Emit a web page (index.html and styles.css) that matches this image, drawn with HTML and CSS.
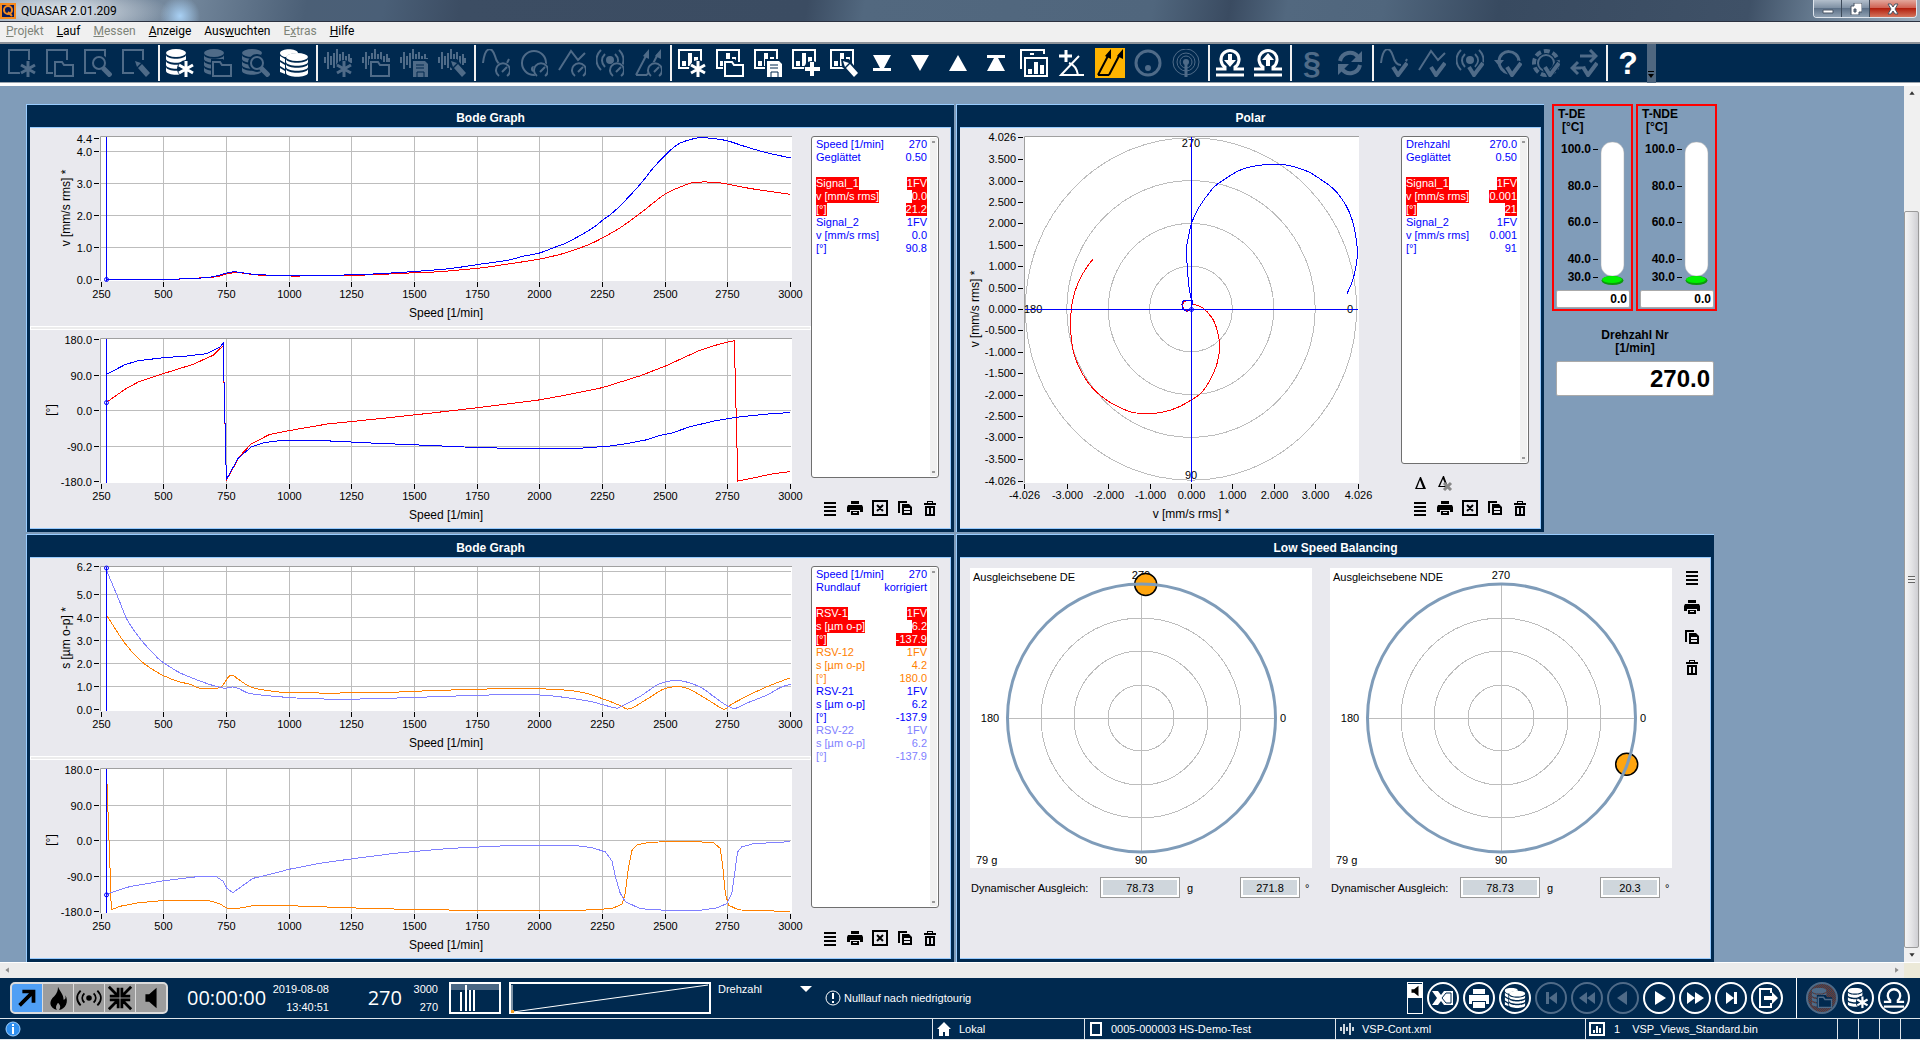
FILE: index.html
```html
<!DOCTYPE html>
<html lang="de">
<head>
    <meta charset="UTF-8">
    <meta name="viewport" content="width=device-width, initial-scale=1.0">
    <title>QUASAR 2.01.209</title>
    <link rel="stylesheet" href="styles.css">
</head>
<body>
    <!-- icon sheet -->
    <svg class="sheet" aria-hidden="true">
        <!-- base shapes -->
        <symbol id="b-page" viewBox="0 0 28 28"><path class="ln" d="M21 11V1H1v23h11"/></symbol>
        <symbol id="b-db" viewBox="0 0 28 28"><ellipse cx="10" cy="4" rx="10" ry="4"/><path d="M0 6c1 5 19 5 20 0v4c-1 5-19 5-20 0zM0 12c1 5 19 5 20 0v4c-1 5-19 5-20 0zM0 18c1 5 19 5 20 0v4c-1 5-19 5-20 0z"/></symbol>
        <symbol id="b-wave" viewBox="0 0 28 28"><path class="ln" d="M1 8v6M4 3v17M7 7v9M10 4v15M13 0v21M16 5v13M19 3v16M22 7v9M25 5v11M27 9v5"/></symbol>
        <symbol id="b-bars" viewBox="0 0 28 28"><path class="ln" d="M1 1h22v18H1z"/><path d="M4 12h4v5H4zM10 4h4v13h-4zM16 8h4v9h-4z"/></symbol>
        <symbol id="b-sine" viewBox="0 0 28 28"><path class="ln" d="M1 14C3-3 10-3 13 7c2 8 5 9 8 9M25 14l2-4"/></symbol>
        <symbol id="b-zig" viewBox="0 0 28 28"><path class="ln" d="M1 21L13 2l7 9 7-7"/></symbol>
        <symbol id="b-radio" viewBox="0 0 28 28"><circle cx="14" cy="11" r="4"/><path class="ln" d="M9 5c-4 4-4 9 0 13M19 5c4 4 4 9 0 13M5 1c-6 6-6 14 0 20M23 1c6 6 6 14 0 20"/></symbol>
        <!-- overlays, lower right corner -->
        <symbol id="o-star" viewBox="0 0 28 28"><circle class="ko" cx="20" cy="20" r="9"/><path class="ln" stroke-width="3" d="M20 12v16M13 16l14 8M27 16l-14 8"/></symbol>
        <symbol id="o-folder" viewBox="0 0 28 28"><path class="ko" d="M7 10h12l2 3h7v15H7z"/><path class="lk" d="M9 13h7l2 3h9v11H9z"/></symbol>
        <symbol id="o-mag" viewBox="0 0 28 28"><circle class="ko" cx="15" cy="14" r="9"/><circle class="lk" cx="15" cy="14" r="6"/><path class="ln" stroke-width="5" d="M19 19l8 8"/></symbol>
        <symbol id="o-pen" viewBox="0 0 28 28"><path class="ko" d="M11 10l8 0 9 12v6h-5L12 18z"/><path d="M13 12l6 2-4 4zM16 19l4-4 8 9-4 4z"/></symbol>
        <symbol id="o-save" viewBox="0 0 28 28"><path class="ko" d="M11 10h17v18H11z"/><path d="M13 12h12l3 3v13H13z"/><path class="kl" d="M16 16h8M16 19h8M17 28v-5h7v5"/></symbol>
        <symbol id="o-plus" viewBox="0 0 28 28"><circle class="ko" cx="20" cy="20" r="8"/><path class="ln" stroke-width="4" d="M20 13v14M13 20h15"/></symbol>
        <symbol id="o-gauge" viewBox="0 0 28 28"><circle class="ko" cx="21" cy="21" r="8"/><path class="ln" d="M17 27a7 7 0 1 1 8 0M20 23l5-5"/></symbol>
        <symbol id="o-check" viewBox="0 0 28 28"><path class="kl" stroke-width="6" d="M13 19l5 7 9-13"/><path class="ln" stroke-width="4" d="M13 18l5 8 9-12"/></symbol>
        <!-- whole glyphs -->
        <symbol id="i-dbs" viewBox="0 0 28 28"><path d="M0 4c1-5 17-5 18 0-5 0-10 1-12 4C3 8 0 6 0 4zM0 7l5 3v4l-5-3zM0 13l5 3v4l-5-3zM0 19l5 3v3l-5-2z"/><ellipse cx="17" cy="8" rx="11" ry="4"/><path d="M6 10c1 5 21 5 22 0v3c-1 5-21 5-22 0zM6 15c1 5 21 5 22 0v3c-1 5-21 5-22 0zM6 20c1 5 21 5 22 0v4c-1 5-21 5-22 0z"/></symbol>
        <symbol id="i-ring" viewBox="0 0 28 28"><circle class="ln" cx="14" cy="14" r="12"/><circle cx="14" cy="20" r="3"/></symbol>
        <symbol id="i-vec" viewBox="0 0 28 28"><path class="ln" d="M2 26L13 5M13 26L24 5M2 26h11"/><path d="M15 0v10l-6-3zM27 0v10l-6-3z"/></symbol>
        <symbol id="i-bottom" viewBox="0 0 28 28"><path d="M5 6h18l-7 13H12zM5 19h18v3H5z"/></symbol>
        <symbol id="i-down" viewBox="0 0 28 28"><path d="M5 6h18l-9 16z"/></symbol>
        <symbol id="i-up" viewBox="0 0 28 28"><path d="M5 22h18L14 6z"/></symbol>
        <symbol id="i-top" viewBox="0 0 28 28"><path d="M5 22h18l-7-13H12zM5 6h18v3H5z"/></symbol>
        <symbol id="i-charts" viewBox="0 0 28 28"><path class="ln" d="M1 20V1h23v4M10 5h4"/><path class="lk" d="M5 9h22v18H5z"/><path d="M8 20h4v5H8zM14 13h4v12h-4zM20 16h4v9h-4z"/></symbol>
        <symbol id="i-angle" viewBox="0 0 28 28"><path class="ln" stroke-width="3" d="M8 1v12M1 7h13"/><path class="ln" d="M26 26H3L21 7M11 14c6 2 8 6 9 12"/></symbol>
        <symbol id="i-dotring" viewBox="0 0 28 28"><circle class="ln" stroke-width="3" cx="14" cy="14" r="12"/><circle cx="14" cy="19" r="3"/></symbol>
        <symbol id="i-mast" viewBox="0 0 28 28"><circle class="ln" cx="14" cy="13" r="13" stroke-width="1"/><circle class="ln" cx="14" cy="13" r="9" stroke-width="1"/><circle class="ln" cx="14" cy="13" r="6" stroke-width="1"/><circle cx="14" cy="13" r="3"/><path class="ln" stroke-width="3" d="M14 14v14"/></symbol>
        <symbol id="i-omdown" viewBox="0 0 28 28"><path class="ln" stroke-width="3" d="M0 20h9v-2a9 9 0 1 1 10 0v2h9M0 26h28"/><path d="M12 5h4v6h4l-6 7-6-7h4z"/></symbol>
        <symbol id="i-omup" viewBox="0 0 28 28"><path class="ln" stroke-width="3" d="M0 20h9v-2a9 9 0 1 1 10 0v2h9M0 26h28"/><path d="M12 17h4v-6h4l-6-7-6 7h4z"/></symbol>
        <symbol id="i-omega" viewBox="0 0 28 28"><path class="ln" stroke-width="3" d="M1 19h8v-2a8 8 0 1 1 10 0v2h8M1 25h26"/></symbol>
        <symbol id="i-sync" viewBox="0 0 28 28"><path class="ln" stroke-width="4" d="M4 12C6 3 17 1 22 8M24 16c-2 9-13 11-18 4"/><path d="M26 2v11H15zM2 26V15h11z"/></symbol>
        <symbol id="i-loop" viewBox="0 0 28 28"><path class="ln" stroke-width="3" d="M5 12C6-1 24 0 25 12M5 13c0 5 4 10 9 11"/><path d="M0 11h10l-5 6z"/></symbol>
        <symbol id="i-bear" viewBox="0 0 28 28"><circle class="ln" cx="14" cy="14" r="12" stroke-width="4" stroke-dasharray="6 3"/><circle class="ln" cx="14" cy="14" r="8" stroke-width="2"/></symbol>
        <symbol id="i-swap" viewBox="0 0 28 28"><path class="ln" stroke-width="3" d="M10 7h16M20 1l6 6-6 6M16 19H2M8 13l-6 6 6 6"/></symbol>
        <!-- small panel glyphs -->
        <symbol id="s-menu" viewBox="0 0 16 16"><path d="M2 2h12v2H2zM2 6h12v2H2zM2 10h12v2H2zM2 14h12v2H2z"/></symbol>
        <symbol id="s-print" viewBox="0 0 16 16"><path d="M4 1h8v3H4zM1 5h14l1 2v5h-3v-2H3v2H0V7zM4 11h8v4H4z"/><path class="pale" d="M6 12h4v1H6z"/></symbol>
        <symbol id="s-x" viewBox="0 0 16 16"><path fill="none" stroke="currentColor" stroke-width="2" d="M1 1h14v14H1zM5 5l6 6M11 5l-6 6"/></symbol>
        <symbol id="s-copy" viewBox="0 0 16 16"><path d="M1 1h9v2H3v10H1zM5 4h7l3 3v8H5z"/><path class="pale" d="M7 8h6v2H7zM7 11h6v2H7z"/></symbol>
        <symbol id="s-trash" viewBox="0 0 16 16"><path d="M2 3h3V1h6v2h3v2H2zM3 6h10v10H3z"/><path class="pale" d="M6 2h4v1H6zM5 8h2v6H5zM9 8h2v6H9z"/></symbol>
        <symbol id="s-delta" viewBox="0 0 16 16"><path fill-rule="evenodd" d="M8 2h1l5 12H3zM8 5L5 13h6z"/></symbol>
        <symbol id="s-deltax" viewBox="0 0 16 16"><path fill-rule="evenodd" d="M6 1h1l4 11H1zM6 4L3 11h6z"/><path stroke="#888" stroke-width="3" d="M7 8l7 7M14 8l-7 7"/></symbol>
    </svg>

    <header class="titlebar">
        <svg class="app-icon" viewBox="0 0 16 16"><rect width="16" height="16" fill="#0a1a5a"/><path fill="none" stroke="#f58a1e" stroke-width="2" d="M1 1h14v14H1z"/><circle cx="8" cy="7" r="4" fill="none" stroke="#f58a1e" stroke-width="2"/><path stroke="#f58a1e" stroke-width="2" d="M8 9l4 4"/></svg>
        <span class="app-name">QUASAR 2.01.209</span>
        <div class="winbuttons">
            <button class="win-min" aria-label="Minimieren"><svg viewBox="0 0 12 12"><path d="M1 7h10v3H1z"/></svg></button>
            <button class="win-max" aria-label="Wiederherstellen"><svg viewBox="0 0 12 12"><path d="M4 0h8v9H9v3H1V3h3zM4 6v3h2V6z"/></svg></button>
            <button class="win-close" aria-label="Schließen"><svg viewBox="0 0 12 12"><path d="M1 1h3l2 3 2-3h3L8 6l3 5H8L6 8l-2 3H1l3-5z"/></svg></button>
        </div>
    </header>

    <nav class="menubar">
        <a class="off" href="#"><u>P</u>rojekt</a>
        <a href="#"><u>L</u>auf</a>
        <a class="off" href="#"><u>M</u>essen</a>
        <a href="#"><u>A</u>nzeige</a>
        <a href="#">Aus<u>w</u>uchten</a>
        <a class="off" href="#">E<u>x</u>tras</a>
        <a href="#"><u>H</u>ilfe</a>
    </nav>

    <div class="toolbar">
        <button disabled aria-label="Projekt neu"><svg><use href="#b-page"/><use href="#o-star"/></svg></button>
        <button disabled aria-label="Projekt öffnen"><svg><use href="#b-page"/><use href="#o-folder"/></svg></button>
        <button disabled aria-label="Projekt suchen"><svg><use href="#b-page"/><use href="#o-mag"/></svg></button>
        <button disabled aria-label="Projekt bearbeiten"><svg><use href="#b-page"/><use href="#o-pen"/></svg></button>
        <i class="sep"></i>
        <button aria-label="Lauf neu"><svg><use href="#b-db"/><use href="#o-star"/></svg></button>
        <button disabled aria-label="Lauf öffnen"><svg><use href="#b-db"/><use href="#o-folder"/></svg></button>
        <button disabled aria-label="Lauf suchen"><svg><use href="#b-db"/><use href="#o-mag"/></svg></button>
        <button aria-label="Läufe"><svg><use href="#i-dbs"/></svg></button>
        <i class="sep"></i>
        <button disabled aria-label="Konfiguration neu"><svg><use href="#b-wave"/><use href="#o-star"/></svg></button>
        <button disabled aria-label="Konfiguration öffnen"><svg><use href="#b-wave"/><use href="#o-folder"/></svg></button>
        <button disabled aria-label="Konfiguration speichern"><svg><use href="#b-wave"/><use href="#o-save"/></svg></button>
        <button disabled aria-label="Konfiguration bearbeiten"><svg><use href="#b-wave"/><use href="#o-pen"/></svg></button>
        <i class="sep"></i>
        <button disabled aria-label="Signal"><svg><use href="#b-sine"/><use href="#o-gauge"/></svg></button>
        <button disabled aria-label="Orbit"><svg><use href="#i-ring"/><use href="#o-gauge"/></svg></button>
        <button disabled aria-label="Trend"><svg><use href="#b-zig"/><use href="#o-gauge"/></svg></button>
        <button disabled aria-label="Sensor"><svg><use href="#b-radio"/><use href="#o-gauge"/></svg></button>
        <button disabled aria-label="Vektor messen"><svg><use href="#i-vec"/><use href="#o-gauge"/></svg></button>
        <i class="sep"></i>
        <button aria-label="Ansicht neu"><svg><use href="#b-bars"/><use href="#o-star"/></svg></button>
        <button aria-label="Ansicht öffnen"><svg><use href="#b-bars"/><use href="#o-folder"/></svg></button>
        <button aria-label="Ansicht speichern"><svg><use href="#b-bars"/><use href="#o-save"/></svg></button>
        <button aria-label="Ansicht hinzufügen"><svg><use href="#b-bars"/><use href="#o-plus"/></svg></button>
        <button aria-label="Ansicht bearbeiten"><svg><use href="#b-bars"/><use href="#o-pen"/></svg></button>
        <button aria-label="Letzte Seite"><svg><use href="#i-bottom"/></svg></button>
        <button aria-label="Nächste Seite"><svg><use href="#i-down"/></svg></button>
        <button aria-label="Vorige Seite"><svg><use href="#i-up"/></svg></button>
        <button aria-label="Erste Seite"><svg><use href="#i-top"/></svg></button>
        <button aria-label="Seiten"><svg><use href="#i-charts"/></svg></button>
        <button aria-label="Winkel"><svg><use href="#i-angle"/></svg></button>
        <button class="active" aria-label="Vektoren"><svg><use href="#i-vec"/></svg></button>
        <button disabled aria-label="Orbit"><svg><use href="#i-dotring"/></svg></button>
        <button disabled aria-label="Funk"><svg><use href="#i-mast"/></svg></button>
        <i class="sep"></i>
        <button aria-label="Auswuchten laden"><svg><use href="#i-omdown"/></svg></button>
        <button aria-label="Auswuchten sichern"><svg><use href="#i-omup"/></svg></button>
        <i class="sep"></i>
        <button class="glyph" disabled>§</button>
        <button disabled aria-label="Aktualisieren"><svg><use href="#i-sync"/></svg></button>
        <i class="sep"></i>
        <button disabled aria-label="Signal prüfen"><svg><use href="#b-sine"/><use href="#o-check"/></svg></button>
        <button disabled aria-label="Trend prüfen"><svg><use href="#b-zig"/><use href="#o-check"/></svg></button>
        <button disabled aria-label="Sensor prüfen"><svg><use href="#b-radio"/><use href="#o-check"/></svg></button>
        <button disabled aria-label="Drehung prüfen"><svg><use href="#i-loop"/><use href="#o-check"/></svg></button>
        <button disabled aria-label="Lager prüfen"><svg><use href="#i-bear"/><use href="#o-check"/></svg></button>
        <button disabled aria-label="Richtung prüfen"><svg><use href="#i-swap"/><use href="#o-check"/></svg></button>
        <i class="sep"></i>
        <button class="glyph">?</button>
        <div class="overflow"><svg viewBox="0 0 8 8"><path d="M1 0h6v1H1zM1 3h6L4 7z"/></svg></div>
    </div>

    <div class="workspace">
        <main class="canvas">
            <section class="panel">
                <h2>Bode Graph</h2>
                <div class="panel-body">
                    <div class="plots">
                        <svg class="plot" id="bode1-amp" viewBox="0 0 781 198"></svg>
                        <div class="splitter"></div>
                        <svg class="plot" id="bode1-phase" viewBox="0 0 781 198"></svg>
                    </div>
                    <div class="side">
                        <div class="legend">
                            <table>
                                <tr><td>Speed [1/min]</td><td>270</td></tr>
                                <tr><td>Geglättet</td><td>0.50</td></tr>
                                <tr><td>&nbsp;</td><td></td></tr>
                                <tr class="hot"><td><span>Signal_1</span></td><td><span>1FV</span></td></tr>
                                <tr class="hot"><td><span>v [mm/s rms]</span></td><td><span>0.0</span></td></tr>
                                <tr class="hot"><td><span>[°]</span></td><td><span>21.2</span></td></tr>
                                <tr><td>Signal_2</td><td>1FV</td></tr>
                                <tr><td>v [mm/s rms]</td><td>0.0</td></tr>
                                <tr><td>[°]</td><td>90.8</td></tr>
                            </table>
                            <div class="thin-scroll"></div>
                        </div>
                        <div class="tools">
                            <button aria-label="Menü"><svg><use href="#s-menu"/></svg></button>
                            <button aria-label="Drucken"><svg><use href="#s-print"/></svg></button>
                            <button aria-label="Excel"><svg><use href="#s-x"/></svg></button>
                            <button aria-label="Kopieren"><svg><use href="#s-copy"/></svg></button>
                            <button aria-label="Löschen"><svg><use href="#s-trash"/></svg></button>
                        </div>
                    </div>
                </div>
            </section>

            <section class="panel">
                <h2>Polar</h2>
                <div class="panel-body">
                    <div class="plots">
                        <svg class="plot" id="polar" viewBox="0 0 441 400"></svg>
                    </div>
                    <div class="side">
                        <div class="legend">
                            <table>
                                <tr><td>Drehzahl</td><td>270.0</td></tr>
                                <tr><td>Geglättet</td><td>0.50</td></tr>
                                <tr><td>&nbsp;</td><td></td></tr>
                                <tr class="hot"><td><span>Signal_1</span></td><td><span>1FV</span></td></tr>
                                <tr class="hot"><td><span>v [mm/s rms]</span></td><td><span>0.001</span></td></tr>
                                <tr class="hot"><td><span>[°]</span></td><td><span>21</span></td></tr>
                                <tr><td>Signal_2</td><td>1FV</td></tr>
                                <tr><td>v [mm/s rms]</td><td>0.001</td></tr>
                                <tr><td>[°]</td><td>91</td></tr>
                            </table>
                            <div class="thin-scroll"></div>
                        </div>
                        <div class="tools two-rows">
                            <button aria-label="Delta"><svg><use href="#s-delta"/></svg></button>
                            <button aria-label="Delta löschen"><svg><use href="#s-deltax"/></svg></button>
                            <button class="row-start" aria-label="Menü"><svg><use href="#s-menu"/></svg></button>
                            <button aria-label="Drucken"><svg><use href="#s-print"/></svg></button>
                            <button aria-label="Excel"><svg><use href="#s-x"/></svg></button>
                            <button aria-label="Kopieren"><svg><use href="#s-copy"/></svg></button>
                            <button aria-label="Löschen"><svg><use href="#s-trash"/></svg></button>
                        </div>
                    </div>
                </div>
            </section>

            <aside class="meters">
                <div class="thermos">
                    <div class="thermo">
                        <label for="tde"><span>T-DE</span><span class="unit">[°C]</span></label>
                        <svg viewBox="0 0 74 152" class="tube"></svg>
                        <input id="tde" type="text" value="0.0" readonly>
                    </div>
                    <div class="thermo">
                        <label for="tnde"><span>T-NDE</span><span class="unit">[°C]</span></label>
                        <svg viewBox="0 0 74 152" class="tube"></svg>
                        <input id="tnde" type="text" value="0.0" readonly>
                    </div>
                </div>
                <div class="rpm">
                    <label for="rpm">Drehzahl Nr<br>[1/min]</label>
                    <input id="rpm" type="text" value="270.0" readonly>
                </div>
            </aside>

            <section class="panel">
                <h2>Bode Graph</h2>
                <div class="panel-body">
                    <div class="plots">
                        <svg class="plot" id="bode2-amp" viewBox="0 0 781 198"></svg>
                        <div class="splitter"></div>
                        <svg class="plot" id="bode2-phase" viewBox="0 0 781 198"></svg>
                    </div>
                    <div class="side">
                        <div class="legend">
                            <table>
                                <tr><td>Speed [1/min]</td><td>270</td></tr>
                                <tr><td>Rundlauf</td><td>korrigiert</td></tr>
                                <tr><td>&nbsp;</td><td></td></tr>
                                <tr class="hot"><td><span>RSV-1</span></td><td><span>1FV</span></td></tr>
                                <tr class="hot"><td><span>s [µm o-p]</span></td><td><span>6.2</span></td></tr>
                                <tr class="hot"><td><span>[°]</span></td><td><span>-137.9</span></td></tr>
                                <tr class="orange"><td>RSV-12</td><td>1FV</td></tr>
                                <tr class="orange"><td>s [µm o-p]</td><td>4.2</td></tr>
                                <tr class="orange"><td>[°]</td><td>180.0</td></tr>
                                <tr><td>RSV-21</td><td>1FV</td></tr>
                                <tr><td>s [µm o-p]</td><td>6.2</td></tr>
                                <tr><td>[°]</td><td>-137.9</td></tr>
                                <tr class="violet"><td>RSV-22</td><td>1FV</td></tr>
                                <tr class="violet"><td>s [µm o-p]</td><td>6.2</td></tr>
                                <tr class="violet"><td>[°]</td><td>-137.9</td></tr>
                            </table>
                            <div class="thin-scroll"></div>
                        </div>
                        <div class="tools">
                            <button aria-label="Menü"><svg><use href="#s-menu"/></svg></button>
                            <button aria-label="Drucken"><svg><use href="#s-print"/></svg></button>
                            <button aria-label="Excel"><svg><use href="#s-x"/></svg></button>
                            <button aria-label="Kopieren"><svg><use href="#s-copy"/></svg></button>
                            <button aria-label="Löschen"><svg><use href="#s-trash"/></svg></button>
                        </div>
                    </div>
                </div>
            </section>

            <section class="panel wide">
                <h2>Low Speed Balancing</h2>
                <div class="panel-body balancing">
                    <div class="plane">
                        <svg class="dial" data-name="Ausgleichsebene DE" data-angle="271.8" viewBox="0 0 342 300"></svg>
                        <div class="balance-row">
                            <label for="de-g">Dynamischer Ausgleich:</label>
                            <input id="de-g" class="mass" type="text" value="78.73" readonly>
                            <span class="unit-g">g</span>
                            <input class="angle" type="text" value="271.8" aria-label="Winkel DE" readonly>
                            <span>°</span>
                        </div>
                    </div>
                    <div class="plane">
                        <svg class="dial" data-name="Ausgleichsebene NDE" data-angle="20.3" viewBox="0 0 342 300"></svg>
                        <div class="balance-row">
                            <label for="nde-g">Dynamischer Ausgleich:</label>
                            <input id="nde-g" class="mass" type="text" value="78.73" readonly>
                            <span class="unit-g">g</span>
                            <input class="angle" type="text" value="20.3" aria-label="Winkel NDE" readonly>
                            <span>°</span>
                        </div>
                    </div>
                    <div class="vtools">
                        <button aria-label="Menü"><svg><use href="#s-menu"/></svg></button>
                        <button aria-label="Drucken"><svg><use href="#s-print"/></svg></button>
                        <button aria-label="Kopieren"><svg><use href="#s-copy"/></svg></button>
                        <button aria-label="Löschen"><svg><use href="#s-trash"/></svg></button>
                    </div>
                </div>
            </section>
        </main>
        <div class="vscroll">
            <svg viewBox="0 0 16 16"><path d="M5 10h6L8 6z"/></svg>
            <div class="thumb"><i></i></div>
            <svg viewBox="0 0 16 16"><path d="M5 6h6l-3 4z"/></svg>
        </div>
    </div>
    <div class="hscroll">
        <svg viewBox="0 0 16 16"><path d="M9 5v6L5 8z"/></svg>
        <svg viewBox="0 0 16 16"><path d="M7 5v6l4-3z"/></svg>
        <i class="corner"></i>
    </div>

    <footer class="runbar">
        <div class="modes">
            <button class="on" aria-label="Hochlauf"><svg viewBox="0 0 28 28"><path fill="none" stroke="currentColor" stroke-width="4" d="M6 22L20 8M9 7h12v12"/></svg></button>
            <button aria-label="Warmlauf"><svg viewBox="0 0 28 28"><path d="M14 2c2 5 6 8 6 14 3-1 2-3 2-5 4 7 0 15-7 16 2-3 2-5-1-8-2 3-3 5-1 8C4 24 4 17 10 12c3-3 4-6 4-10z"/></svg></button>
            <button aria-label="Sensoren"><svg viewBox="0 0 28 28"><circle cx="14" cy="14" r="3"/><path fill="none" stroke="currentColor" stroke-width="2" d="M9 9c-3 3-3 7 0 10M19 9c3 3 3 7 0 10M5 6c-5 5-5 11 0 16M23 6c5 5 5 11 0 16"/></svg></button>
            <button aria-label="Verkleinern"><svg viewBox="0 0 28 28"><path fill="none" stroke="currentColor" stroke-width="3" d="M2 2l9 9M12 3v9H3M26 2l-9 9M16 3v9h9M2 26l9-9M12 25v-9H3M26 26l-9-9M16 25v-9h9"/></svg></button>
            <button aria-label="Ton"><svg viewBox="0 0 28 28"><path d="M8 10h4l8-7v22l-8-7H8z"/></svg></button>
        </div>
        <span class="big clock">00:00:00</span>
        <span class="pair date">2019-08-08<br>13:40:51</span>
        <span class="big speed">270</span>
        <span class="pair limits">3000<br>270</span>
        <svg class="mini-bars" viewBox="0 0 52 32"><path fill="#4a6784" d="M1 1h50v7H1z"/><path class="edge" d="M1 1h50v30H1z"/><path fill="#fff" d="M11 10h2v19h-2zM16 3h2v26h-2zM20 8h2v21h-2zM24 8h2v21h-2z"/></svg>
        <svg class="mini-ramp" viewBox="0 0 202 32"><path class="edge" d="M1 1h200v30H1z"/><path fill="none" stroke="#fff" d="M3 3v26M4 30L199 3"/><path fill="#f5a01e" d="M2 28h3v3H2z"/></svg>
        <div class="channel">
            <select aria-label="Kanal"><option>Drehzahl</option></select>
            <svg viewBox="0 0 12 6"><path d="M0 0h12L6 6z"/></svg>
        </div>
        <div class="notice"><svg viewBox="0 0 16 16"><circle cx="8" cy="8" r="7" fill="none" stroke="#fff"/><path fill="#fff" d="M7 3h2v6H7zM7 11h2v2H7z"/></svg>Nulllauf nach niedrigtourig</div>
        <div class="player">
            <button class="volume" aria-label="Lautstärke"><svg viewBox="0 0 16 32"><path fill="#fff" d="M0 0h16v16H0z"/><path d="M4 6h3l5-4v12l-5-4H4z"/></svg></button>
            <button class="round" aria-label="Excel"><svg viewBox="0 0 28 28"><path d="M3 7h6l3 4 3-4h9v14h-9l-3-4-3 4H3l5-7z"/><path class="kl" d="M17 9l-4 5 4 5M17 9h5v10h-5"/></svg></button>
            <button class="round" aria-label="Drucken"><svg viewBox="0 0 28 28"><path d="M8 5h12v5H8zM4 11h20v9h-3v-3H7v3H4zM8 18h12v6H8z"/></svg></button>
            <button class="round" aria-label="Läufe"><svg viewBox="-5 -5 38 38"><use href="#i-dbs" width="28" height="28"/></svg></button>
            <button class="round" disabled aria-label="Anfang"><svg viewBox="0 0 28 28"><path d="M9 8h3v12H9zM20 8v12l-8-6z"/></svg></button>
            <button class="round" disabled aria-label="Zurückspulen"><svg viewBox="0 0 28 28"><path d="M14 8v12l-8-6zM22 8v12l-8-6z"/></svg></button>
            <button class="round" disabled aria-label="Zurück"><svg viewBox="0 0 28 28"><path d="M18 7v14L8 14z"/></svg></button>
            <button class="round" aria-label="Start"><svg viewBox="0 0 28 28"><path d="M10 7v14l11-7z"/></svg></button>
            <button class="round" aria-label="Vorspulen"><svg viewBox="0 0 28 28"><path d="M6 8v12l8-6zM14 8v12l9-6z"/></svg></button>
            <button class="round" aria-label="Ende"><svg viewBox="0 0 28 28"><path d="M9 8v12l8-6zM17 8h3v12h-3z"/></svg></button>
            <button class="round" aria-label="Export"><svg viewBox="0 0 28 28"><path class="ln" d="M18 9V5H7v18h11v-4"/><path d="M11 12h8V8l6 6-6 6v-4h-8z"/></svg></button>
            <i class="bar-sep"></i>
            <button class="round stop" disabled aria-label="Lauf öffnen"><svg viewBox="-5 -5 38 38"><use href="#b-db" width="28" height="28"/><use href="#o-folder" width="28" height="28"/></svg></button>
            <button class="round" aria-label="Lauf neu"><svg viewBox="-5 -5 38 38"><use href="#b-db" width="28" height="28"/><use href="#o-star" width="28" height="28"/></svg></button>
            <button class="round" aria-label="Auswuchten"><svg viewBox="-4 -4 36 36"><use href="#i-omega" width="28" height="28"/></svg></button>
        </div>
    </footer>

    <div class="statusbar">
        <div class="info"><svg viewBox="0 0 16 16"><circle cx="8" cy="8" r="7" fill="#2f8fee" stroke="#9fd0ff"/><path fill="#fff" d="M7 3h2v2H7zM7 6h2v7H7z"/></svg></div>
        <div><svg viewBox="0 0 16 16"><path d="M8 1l7 7h-2v7H9v-4H7v4H3V8H1z"/></svg>Lokal</div>
        <div><svg viewBox="0 0 16 16"><path fill="none" stroke="#fff" stroke-width="2" d="M3 2h10v12H3z"/></svg>0005-000003 HS-Demo-Test</div>
        <div><svg viewBox="0 0 16 16"><path fill="none" stroke="#ccd6e0" stroke-width="2" d="M2 6v4M5 3v10M8 6v4M11 2v12M14 6v4"/></svg>VSP-Cont.xml</div>
        <div><svg viewBox="0 0 16 16"><path fill="none" stroke="#fff" stroke-width="2" d="M1 2h14v12H1zM5 12V9M8 12V5M11 12V7"/></svg><span class="page-no">1</span>VSP_Views_Standard.bin</div>
        <div></div><div></div><div></div><div></div>
    </div>
    <script src="charts.js"></script>
</body>
</html>
```
FILE: styles.css
```css
:root {
    --navy: #00294f;
    --sky: #99ccff;
    --steel: #809cb9;
    --pale: #e9e9ee;
    --off: #4f6b88;
}

* {
    box-sizing: border-box;
}

body {
    margin: 0;
    min-height: 100vh;
    display: flex;
    flex-direction: column;
    background: var(--steel);
    font-family: "Liberation Sans", Arial, sans-serif;
    font-size: 11px;
    color: #000;
}

button {
    padding: 0;
    border: 0;
    background: none;
    color: inherit;
    font-family: inherit;
}

svg {
    display: block;
    fill: currentColor;
}

.sheet {
    position: absolute;
    width: 0;
    height: 0;
}

.ln {
    fill: none;
    stroke: currentColor;
    stroke-width: 2;
}

.ln[stroke-width="1"] { stroke-width: 1; }
.ln[stroke-width="3"] { stroke-width: 3; }
.ln[stroke-width="4"] { stroke-width: 4; }
.ln[stroke-width="5"] { stroke-width: 5; }

.lk {
    fill: var(--navy);
    stroke: currentColor;
    stroke-width: 2;
}

.ko {
    fill: var(--navy);
}

.kl {
    fill: none;
    stroke: var(--navy);
}

.pale {
    fill: var(--pale);
}

/* window frame */
.titlebar {
    height: 22px;
    display: flex;
    align-items: center;
    gap: 5px;
    border-bottom: 1px solid #2b3140;
    background:
        radial-gradient(ellipse 110px 26px at 60px 12px, rgba(235,240,245,.95), rgba(235,240,245,0)),
        radial-gradient(circle 20px at 180px 16px, #a8d0f4, rgba(120,160,200,0)),
        linear-gradient(100deg, #8b9aab 0, #71859a 10%, #4b5f76 16%, #4a5f77 20%, #3c4d63 24%, #3b4c62 42%, #52687f 45%, #50667d 60%, #3a4b61 64%, #52687f 67%, #50667d 72%, #384a60 78%, #3f5167 91%, #6c8196 95%, #9aabbb 100%);
    font: 12px/20px Roboto, sans-serif;
}

.app-icon {
    width: 16px;
    height: 16px;
}

.winbuttons {
    margin: 0 3px 3px auto;
    height: 18px;
    display: flex;
    border: 1px solid #dfe6ee;
    border-top: 0;
    border-radius: 0 0 4px 4px;
    overflow: hidden;
}

.winbuttons button {
    width: 28px;
    display: flex;
    align-items: center;
    justify-content: center;
    color: #fff;
    border-right: 1px solid #3c4a5a;
    background: linear-gradient(#b3bfcc, #7c8ea2 48%, #5d7188 50%, #8fa0b2);
}

.winbuttons svg {
    width: 12px;
    height: 12px;
    stroke: #4a5766;
}

.winbuttons .win-close {
    width: 46px;
    border: 0;
    background: linear-gradient(#e3a79c, #cf5f50 48%, #b3200f 50%, #d4745c);
}

.menubar {
    height: 22px;
    display: flex;
    gap: 13px;
    padding: 0 6px;
    background: #f0f0f0;
    border-bottom: 2px solid #8d9299;
    font: 12px/18px Roboto, sans-serif;
}

.menubar a {
    color: #000;
    text-decoration: none;
}

.menubar .off {
    color: #7d8378;
}

.toolbar {
    height: 42px;
    display: flex;
    padding-left: 3px;
    background: var(--navy);
    color: #fff;
    border-bottom: 3px solid #fff;
    box-shadow: inset 0 -1px #9aa4ae;
}

.toolbar button {
    width: 38px;
    height: 38px;
    display: flex;
    align-items: center;
    justify-content: center;
}

.toolbar button:disabled {
    color: var(--off);
}

.toolbar svg {
    width: 28px;
    height: 28px;
}

.toolbar .active svg {
    width: 30px;
    height: 30px;
    padding: 1px;
    background: #ffb400;
    color: #000;
}

.toolbar .glyph {
    font-size: 32px;
    font-weight: bold;
    line-height: 32px;
}

.toolbar .sep {
    width: 2px;
    height: 36px;
    margin: 1px 1px 0 3px;
    background: #f0f0f0;
}

.toolbar .overflow {
    width: 9px;
    display: flex;
    align-items: flex-end;
    padding-bottom: 4px;
    background: #4f6780;
    color: #000;
}

.toolbar .overflow svg {
    width: 8px;
    height: 8px;
}

/* workspace */
.workspace {
    flex: 1;
    display: flex;
}

.canvas {
    flex: 1;
    display: grid;
    grid-template-columns: 928fr 588fr 168fr 188fr;
    align-content: start;
    gap: 2px;
    padding: 18px 0 0 26px;
}

.panel {
    min-width: 0;
    display: flex;
    flex-direction: column;
    padding: 2px 3px 3px;
    background: var(--navy);
    border: 1px solid var(--sky);
    border-width: 1px 0 0 1px;
}

.panel.wide {
    grid-column: span 2;
}

.panel h2 {
    margin: 0;
    padding-top: 2px;
    color: #fff;
    text-align: center;
    font-size: 12px;
    line-height: 18px;
}

.panel-body {
    flex: 1;
    display: flex;
    background: var(--pale);
    border: 1px solid var(--sky);
    border-left: 0;
}

.plots {
    flex: 1;
    min-width: 0;
}

.plot {
    width: 100%;
    height: auto;
}

.splitter {
    height: 4px;
    background: #ececec;
    border: 1px solid #fff;
}

.side {
    width: 139px;
    display: flex;
    flex-direction: column;
    padding: 8px 11px 12px 0;
}

.legend {
    flex: 1;
    display: flex;
    justify-content: space-between;
    padding: 1px 1px 1px 4px;
    background: #fff;
    border: 1px solid #6f6f6f;
    border-radius: 3px;
    color: #00f;
}

.legend table {
    width: 111px;
    align-self: flex-start;
    border-collapse: collapse;
}

.legend td {
    padding: 0;
    height: 13px;
    line-height: 13px;
    white-space: nowrap;
}

.legend td:last-child {
    text-align: right;
}

.legend .hot span {
    display: inline-block;
    background: #f00;
    color: #fff;
}

.legend .orange { color: #ff8000; }
.legend .violet { color: #8080ff; }

.thin-scroll {
    width: 7px;
    background: #f0f0f0;
    border: 2px solid #f0f0f0;
    border-width: 3px 2px;
    background-image: linear-gradient(#999, #999), linear-gradient(#999, #999);
    background-size: 3px 2px;
    background-position: center top, center bottom;
    background-repeat: no-repeat;
}

.tools {
    display: grid;
    grid-template-columns: repeat(5, 16px);
    gap: 9px;
    padding: 22px 0 0 11px;
}

.tools.two-rows {
    padding-top: 11px;
}

.tools .row-start {
    grid-column: 1;
}

.tools svg,
.vtools svg {
    width: 16px;
    height: 16px;
}

svg text {
    font-size: 11px;
    fill: #000;
}

svg .axis-title {
    font-size: 12px;
}

.field { fill: #fff; }
.rim { fill: none; stroke: #a0a0a0; }
.grid { fill: none; stroke: #bdbdbd; shape-rendering: crispEdges; }
.tick { stroke: #000; shape-rendering: crispEdges; }
.cursor { fill: none; stroke: #00f; }
.curve { fill: none; shape-rendering: crispEdges; }

/* meters */
.meters {
    grid-column: span 2;
    padding-left: 6px;
    font-size: 12px;
    font-weight: bold;
}

.thermos {
    display: flex;
    gap: 3px;
}

.thermo {
    width: 81px;
    padding: 2px 1px 1px 2px;
    border: 2px solid #f00;
}

.thermo label {
    display: flex;
    flex-direction: column;
    padding-left: 2px;
    line-height: 13px;
}

.thermo .unit {
    padding-left: 4px;
}

.tube {
    width: 74px;
    height: 152px;
}

.tube text {
    font-size: 12px;
}

.thermo input,
.rpm input {
    display: block;
    width: 100%;
    border: 1px solid #aaa;
    border-radius: 2px;
    background: #fff;
    font: inherit;
    text-align: right;
}

.thermo input {
    height: 18px;
    margin-top: 4px;
    padding: 0 2px;
}

.rpm {
    width: 158px;
    margin: 18px 0 0 4px;
    text-align: center;
    line-height: 13px;
}

.rpm label {
    display: block;
    margin-bottom: 6px;
}

.rpm input {
    height: 35px;
    padding: 0 3px;
    font-size: 24px;
}

/* balancing */
.balancing {
    gap: 18px;
    padding: 10px;
}

.plane {
    flex: 1;
    min-width: 0;
}

.dial {
    width: 100%;
    height: auto;
    background: #fff;
}

.balance-row {
    display: flex;
    align-items: center;
    margin-top: 9px;
    padding-left: 1px;
}

.balance-row label {
    width: 129px;
}

.balance-row input {
    height: 21px;
    padding: 0;
    border: 1px solid #999;
    box-shadow: inset 0 0 0 2px #fff;
    background: #cfd6dc;
    font: inherit;
    text-align: center;
}

.balance-row .mass { width: 80px; }
.balance-row .angle { width: 60px; margin-right: 5px; }

.unit-g {
    width: 60px;
    padding-left: 7px;
}

.vtools {
    width: 16px;
    display: flex;
    flex-direction: column;
    gap: 14px;
    margin-left: -6px;
    padding-top: 1px;
}

/* scrollbars */
.vscroll {
    width: 16px;
    display: flex;
    flex-direction: column;
    background: #f0f0f0;
    color: #333;
}

.vscroll svg,
.hscroll svg {
    width: 16px;
    height: 14px;
}

.vscroll .thumb {
    flex: 1;
    display: flex;
    align-items: center;
    justify-content: center;
    margin: 111px 1px 0 0;
    border: 1px solid #9a9a9a;
    border-radius: 2px;
    background: linear-gradient(to right, #f5f5f5, #e4e4e6 50%, #cfcfd3);
}

.vscroll .thumb i {
    width: 7px;
    height: 7px;
    background: repeating-linear-gradient(#666 0, #666 1px, #eee 1px, #eee 3px);
}

.hscroll {
    height: 16px;
    display: flex;
    background: #ececec;
    border-top: 1px solid #fff;
    color: #888;
}

.hscroll svg + svg {
    margin-left: auto;
}

.hscroll .corner {
    width: 16px;
    background: #ece9d8;
}

/* run bar */
.runbar {
    height: 40px;
    display: flex;
    align-items: center;
    padding: 0 10px;
    background: var(--navy);
    color: #fff;
    line-height: 18px;
}

.modes {
    display: flex;
    border: 2px solid #dcdcdc;
    border-radius: 5px;
    overflow: hidden;
    background: #dcdcdc;
    gap: 1px;
}

.modes button {
    width: 30px;
    height: 28px;
    display: flex;
    align-items: center;
    justify-content: center;
    background: #9d9d9d;
    color: #000;
}

.modes .on {
    background: #4f9ff5;
}

.modes svg {
    width: 26px;
    height: 26px;
}

.runbar .big {
    font-family: "Open Sans", sans-serif;
    font-size: 20px;
}

.clock {
    width: 84px;
    margin-left: 19px;
}

.pair {
    text-align: right;
    white-space: nowrap;
}

.date { width: 58px; }
.speed { width: 73px; text-align: right; }
.limits { width: 36px; }

.mini-bars {
    width: 52px;
    height: 32px;
    margin: 0 8px 0 11px;
}

.mini-ramp {
    width: 202px;
    height: 32px;
}

.edge {
    fill: none;
    stroke: #fff;
    stroke-width: 2;
}

.channel {
    width: 94px;
    display: flex;
    align-items: center;
    align-self: flex-start;
    margin: 2px 13px 0 7px;
}

.channel select {
    flex: 1;
    appearance: none;
    border: 0;
    padding: 0;
    background: var(--navy);
    color: #fff;
    font: inherit;
}

.channel svg {
    width: 12px;
    height: 6px;
}

.notice {
    display: flex;
    align-items: center;
    gap: 3px;
}

.notice svg {
    width: 16px;
    height: 16px;
}

.player {
    margin-left: auto;
    display: flex;
    gap: 4px;
}

.volume {
    width: 16px;
    height: 32px;
    border: 1px solid #fff;
    color: #000;
}

.round {
    width: 32px;
    height: 32px;
    display: flex;
    align-items: center;
    justify-content: center;
    border: 2px solid #fff;
    border-radius: 50%;
}

.round:disabled {
    color: var(--off);
    border-color: var(--off);
}

.round.stop {
    background: repeating-conic-gradient(#7a3a2c 0 25%, #24425f 0 50%) 0 0 / 2px 2px;
}

.round svg {
    width: 28px;
    height: 28px;
}

.bar-sep {
    width: 1px;
    height: 40px;
    margin: -4px 5px -4px 9px;
    background: #fff;
}

.statusbar {
    height: 22px;
    display: grid;
    grid-template-columns: 932fr 152fr 251fr 250fr 252fr 21fr 21fr 21fr 20fr;
    background: var(--navy);
    border-top: 1px solid #dfe5ea;
    border-bottom: 1px solid #dfe5ea;
    color: #fff;
}

.statusbar div {
    display: flex;
    align-items: center;
    padding-left: 3px;
    gap: 7px;
    border-left: 1px solid #dfe5ea;
    white-space: nowrap;
}

.statusbar .info {
    border-left: 0;
    padding-left: 5px;
}

.statusbar svg {
    width: 16px;
    height: 16px;
}

.page-no {
    padding: 0 5px 0 2px;
}
```
FILE: charts.js
```js
const NS = 'http://www.w3.org/2000/svg';

function add(svg, tag, attrs, text) {
    const el = document.createElementNS(NS, tag);
    for (const k in attrs) el.setAttribute(k, attrs[k]);
    if (text !== undefined) el.textContent = text;
    svg.appendChild(el);
    return el;
}

function label(svg, x, y, text, anchor, cls) {
    return add(svg, 'text', { x: x, y: y, 'text-anchor': anchor || 'middle', class: cls || '' }, text);
}

function yTitle(svg, x, y, text) {
    const t = label(svg, x, y, text, 'middle', 'axis-title');
    t.setAttribute('transform', `rotate(-90 ${x} ${y})`);
}

// rounded path through the points
function smooth(pts) {
    let d = `M${pts[0]}`;
    for (let i = 0; i < pts.length - 1; i++) {
        const a = pts[i - 1] || pts[i], b = pts[i], c = pts[i + 1], e = pts[i + 2] || c;
        d += `C${b[0] + (c[0] - a[0]) / 6},${b[1] + (c[1] - a[1]) / 6} ${c[0] - (e[0] - b[0]) / 6},${c[1] - (e[1] - b[1]) / 6} ${c}`;
    }
    return d;
}

const BLUE = '#00f', RED = '#f00', ORANGE = '#ff8000', VIOLET = '#8080ff';

// speed axis, 250 .. 3000 1/min
const sx = s => 71 + (s - 250) * 689.5 / 2750;

function bode(id, opt) {
    const svg = document.getElementById(id);
    const sy = v => opt.zero - v * opt.scale;
    add(svg, 'rect', { x: 70, y: 8, width: 692, height: 145, class: 'field' });
    for (const v of opt.lines) {
        add(svg, 'line', { x1: 71, x2: 761, y1: Math.round(sy(v)) + 0.5, y2: Math.round(sy(v)) + 0.5, class: 'grid' });
    }
    for (let s = 250; s <= 3000; s += 250) {
        const x = Math.floor(sx(s)) + 0.5;
        if (s > 250 && s < 3000) add(svg, 'line', { x1: x, x2: x, y1: 9, y2: 153, class: 'grid' });
        add(svg, 'line', { x1: x, x2: x, y1: 154, y2: 159, class: 'tick' });
        label(svg, x, 170, s);
    }
    add(svg, 'path', { d: 'M70.500 153V8.500H762', class: 'rim' });
    for (const v of opt.ticks) {
        const y = Math.round(sy(v)) + 0.5;
        add(svg, 'line', { x1: 64, x2: 69, y1: y, y2: y, class: 'tick' });
        label(svg, 62, y + 4, v.toFixed(1), 'end');
    }
    for (const c of opt.curves) {
        const pts = c.data.map(p => [sx(p[0]), sy(p[1]) + 0.5]);
        const d = opt.jumps ? 'M' + pts.join('L') : smooth(pts);
        add(svg, 'path', { d: d, stroke: c.color, class: 'curve' });
    }
    add(svg, 'line', { x1: 76.5, x2: 76.5, y1: 9, y2: 153, class: 'cursor' });
    add(svg, 'circle', { cx: 76.5, cy: sy(opt.mark) + 0.5, r: 2, class: 'cursor' });
    label(svg, 416, 189, 'Speed [1/min]', 'middle', 'axis-title');
    yTitle(svg, opt.titleX, 80, opt.title);
}

const phase = { zero: 80, scale: 71 / 180, lines: [90, 0, -90], ticks: [180, 90, 0, -90, -180], title: '[°]', titleX: 25, jumps: true };

bode('bode1-amp', {
    zero: 151, scale: 32, lines: [1, 2, 3, 4], ticks: [4.4, 4, 3, 2, 1, 0], mark: 0,
    title: 'v [mm/s rms] *', titleX: 40,
    curves: [
        { color: RED, data: [[270,0],[500,0],[575,.02],[690,.07],[720,.1],[760,.19],[800,.21],[850,.16],[900,.13],[1000,.11],[1050,.11],[1300,.14],[1500,.21],[1570,.23],[1640,.27],[1763,.36],[1870,.48],[2000,.64],[2102,.83],[2189,1.07],[2250,1.3],[2321,1.62],[2401,2.07],[2454,2.4],[2502,2.68],[2554,2.87],[2614,3.03],[2693,3.04],[2750,2.98],[2813,2.88],[2892,2.78],[3000,2.66]] },
        { color: BLUE, data: [[270,0],[500,0],[575,.02],[640,.04],[690,.08],[720,.13],[750,.2],[775,.235],[800,.23],[850,.17],[950,.13],[1150,.13],[1300,.16],[1400,.2],[1500,.25],[1640,.34],[1763,.48],[1870,.6],[1936,.73],[2000,.83],[2050,.98],[2102,1.13],[2162,1.38],[2215,1.63],[2250,1.85],[2288,2.07],[2328,2.36],[2401,2.98],[2454,3.5],[2502,3.9],[2554,4.24],[2614,4.4],[2647,4.43],[2700,4.4],[2750,4.33],[2813,4.17],[2886,4],[2946,3.89],[3000,3.8]] }
    ]
});

bode('bode1-phase', Object.assign({}, phase, {
    mark: 20,
    curves: [
        { color: RED, data: [[270,20],[351,56],[398,72],[501,94],[617,117],[697,140],[737,164],[750,-177],[803,-116],[850,-84],[922,-61],[1000,-51],[1155,-34],[1388,-19],[1588,-5],[1763,8],[2000,27],[2102,39],[2250,58],[2401,88],[2502,113],[2640,153],[2720,169],[2776,177],[2790,-179],[2866,-169],[2933,-160],[3000,-155]] },
        { color: BLUE, data: [[270,91],[345,116],[397,126],[500,134],[590,138],[670,144],[724,161],[737,170],[750,-175],[796,-122],[850,-92],[897,-82],[956,-77],[1122,-76],[1348,-83],[1575,-89],[1750,-94],[1896,-96],[2155,-96],[2281,-90],[2348,-84],[2428,-74],[2481,-63],[2527,-57],[2600,-41],[2693,-27],[2787,-17],[2906,-9],[3000,-5]] }
    ]
}));

bode('bode2-amp', {
    zero: 151, scale: 23, lines: [1, 2, 3, 4, 5, 6], ticks: [6.2, 5, 4, 3, 2, 1, 0], mark: 6.15,
    title: 's [µm o-p] *', titleX: 40,
    curves: [
        { color: ORANGE, data: [[270,4.1],[278,4],[344,2.9],[404,2.16],[457,1.73],[500,1.47],[557,1.22],[604,1.1],[644,.93],[717,.93],[740,1.12],[757,1.4],[774,1.5],[797,1.32],[830,1.08],[863,.92],[910,.83],[1016,.73],[1348,.73],[1521,.8],[1787,.89],[2029,.89],[2162,.76],[2255,.45],[2321,.17],[2348,.02],[2374,.1],[2441,.54],[2494,.89],[2547,1],[2593,.9],[2666,.45],[2720,.08],[2740,.02],[2773,.28],[2893,.93],[3000,1.38]] },
        { color: VIOLET, data: [[270,6.1],[291,5.56],[324,4.7],[351,3.97],[384,3.4],[424,2.84],[477,2.23],[500,2.03],[564,1.6],[630,1.3],[683,1.09],[730,.95],[750,.93],[776,.98],[803,.89],[843,.7],[936,.58],[1029,.5],[1175,.45],[1348,.47],[1621,.57],[1840,.64],[2000,.63],[2082,.55],[2201,.35],[2274,.14],[2307,.06],[2327,.14],[2400,.57],[2467,1.06],[2513,1.23],[2573,1.23],[2640,.98],[2693,.57],[2746,.17],[2780,.05],[2826,.28],[2906,.63],[2959,.95],[3000,1.1]] }
    ]
});

bode('bode2-phase', Object.assign({}, phase, {
    mark: -137.9,
    curves: [
        { color: ORANGE, data: [[272,180],[274,143],[278,72],[286,-71],[291,-176],[324,-167],[398,-158],[500,-152],[677,-152],[723,-160],[750,-171],[790,-173],[857,-165],[990,-165],[1256,-171],[1495,-175],[1841,-178],[2222,-176],[2294,-171],[2328,-161],[2341,-134],[2354,-67],[2368,-25],[2388,-11],[2441,-4],[2627,-3],[2693,-6],[2720,-20],[2730,-67],[2740,-134],[2753,-164],[2793,-176],[3000,-180]] },
        { color: VIOLET, data: [[270,-137],[291,-132],[364,-117],[500,-102],[630,-92],[710,-92],[737,-103],[753,-122],[776,-132],[803,-120],[856,-96],[936,-84],[1000,-73],[1122,-58],[1256,-46],[1428,-32],[1641,-20],[1840,-14],[1909,-12],[2142,-13],[2208,-18],[2262,-29],[2288,-52],[2301,-90],[2321,-134],[2341,-155],[2401,-173],[2502,-177],[2640,-177],[2706,-171],[2746,-160],[2766,-133],[2777,-84],[2789,-29],[2806,-16],[2853,-8],[3000,-3]] }
    ]
}));

function polar() {
    const svg = document.getElementById('polar');
    const px = v => 231 + v * 41.4, py = v => 181 - v * 42.8;
    add(svg, 'rect', { x: 64, y: 8, width: 335, height: 347, class: 'field' });
    for (let r = 1; r <= 4; r++) {
        add(svg, 'ellipse', { cx: 231, cy: 181, rx: r * 41.4, ry: r * 42.8, class: 'grid' });
    }
    add(svg, 'path', { d: 'M64.500 355V8.500H399', class: 'rim' });
    const ys = [4.026, 3.5, 3, 2.5, 2, 1.5, 1, .5, 0, -.5, -1, -1.5, -2, -2.5, -3, -3.5, -4.026];
    for (const v of ys) {
        const y = Math.round(py(v)) + 0.5;
        add(svg, 'line', { x1: 58, x2: 63, y1: y, y2: y, class: 'tick' });
        label(svg, 56, y + 3, v.toFixed(3), 'end');
    }
    for (const v of [-4.026, -3, -2, -1, 0, 1, 2, 3, 4.026]) {
        const x = Math.round(px(v)) + 0.5;
        add(svg, 'line', { x1: x, x2: x, y1: 356, y2: 361, class: 'tick' });
        label(svg, x, 371, v.toFixed(3));
    }
    label(svg, 231, 19, '270');
    label(svg, 231, 351, '90');
    label(svg, 64, 185, '180', 'start');
    label(svg, 390, 185, '0');
    const curves = [
        [RED, [[0,0],[-.1,-.05],[-.2,.05],[-.15,.18],[.02,.19],[.05,.12],[.28,.03],[.51,-.21],[.62,-.45],[.69,-.8],[.67,-1.11],[.56,-1.46],[.28,-1.93],[0,-2.13],[-.37,-2.32],[-.74,-2.42],[-1.11,-2.45],[-1.53,-2.38],[-2.08,-2.1],[-2.5,-1.7],[-2.82,-1.07],[-2.91,-.41],[-2.87,.14],[-2.73,.61],[-2.5,1],[-2.36,1.17]]],
        [BLUE, [[0,0],[-.12,-.05],[-.21,.05],[-.18,.19],[.02,.2],[.03,.13],[-.05,.53],[-.09,1],[-.11,1.39],[-.06,1.7],[.03,2.05],[.19,2.37],[.51,2.8],[.69,2.95],[1.2,3.25],[1.76,3.37],[2.27,3.37],[2.78,3.23],[3.1,3.05],[3.47,2.78],[3.75,2.41],[3.89,2.09],[3.98,1.7],[4.02,1.31],[3.98,.96],[3.89,.63],[3.76,.34]]]
    ];
    for (const [color, data] of curves) {
        add(svg, 'path', { d: smooth(data.map(p => [px(p[0]), py(p[1])])), stroke: color, class: 'curve' });
    }
    add(svg, 'path', { d: 'M231.500 9V354M65 181.500H398', class: 'cursor' });
    add(svg, 'circle', { cx: 231.5, cy: 181.5, r: 2, class: 'cursor' });
    label(svg, 231, 390, 'v [mm/s rms] *', 'middle', 'axis-title');
    yTitle(svg, 19, 181, 'v [mm/s rms] *');
}
polar();

// balancing planes
for (const svg of document.querySelectorAll('.dial')) {
    for (const r of [33, 67, 100]) add(svg, 'circle', { cx: 171, cy: 150, r: r, class: 'grid' });
    add(svg, 'path', { d: 'M171.500 16V284M37 150.500H305', class: 'grid' });
    label(svg, 3, 13, svg.dataset.name, 'start');
    label(svg, 6, 296, '79 g', 'start');
    label(svg, 171, 11, '270');
    label(svg, 171, 296, '90');
    label(svg, 20, 154, '180');
    label(svg, 313, 154, '0');
    const a = svg.dataset.angle * Math.PI / 180;
    add(svg, 'circle', { cx: 171.5 + 133.5 * Math.cos(a), cy: 150 + 133.5 * Math.sin(a), r: 11, fill: '#ffa50f', stroke: '#000', 'stroke-width': 1.5 });
    add(svg, 'circle', { cx: 171.5, cy: 150, r: 134, fill: 'none', stroke: '#7f9cb9', 'stroke-width': 3 });
}

// thermometer scales, 30 .. 100 °C
for (const svg of document.querySelectorAll('.tube')) {
    for (const [v, y] of [[100, 15], [80, 52], [60, 88], [40, 125], [30, 143]]) {
        label(svg, 35, y + 4, v.toFixed(1), 'end');
        add(svg, 'line', { x1: 37, x2: 42, y1: y + 0.5, y2: y + 0.5, class: 'tick' });
    }
    add(svg, 'rect', { x: 45, y: 8, width: 23, height: 134, rx: 11, fill: '#fff', stroke: '#aaa', 'stroke-width': 0.5 });
    add(svg, 'ellipse', { cx: 56.5, cy: 146.5, rx: 11, ry: 4.5, fill: '#0c9a0c' });
    add(svg, 'ellipse', { cx: 56, cy: 145.5, rx: 10, ry: 3.5, fill: '#00f000' });
}
```
